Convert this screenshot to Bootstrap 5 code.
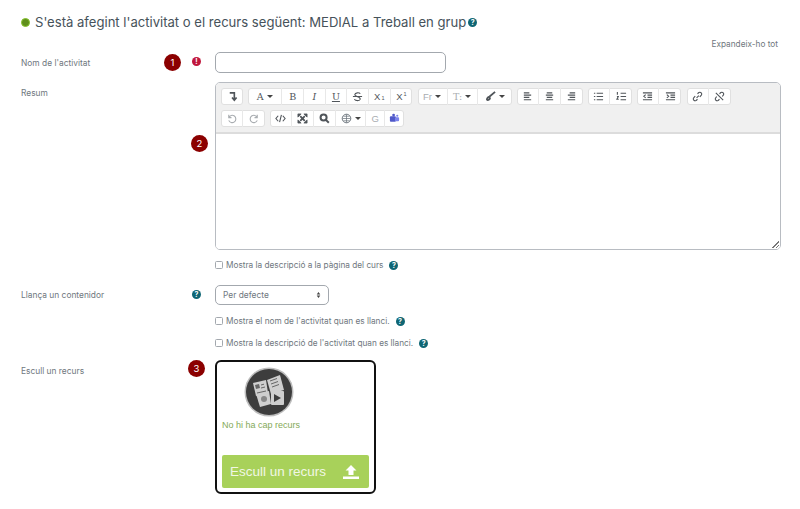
<!DOCTYPE html>
<html lang="ca">
<head>
  <meta charset="UTF-8" />
  <meta name="viewport" content="width=device-width, initial-scale=1.0"/>
  <title>Afegeix MEDIAL</title>
  <link href="https://cdn.jsdelivr.net/npm/bootstrap@5.3.4/dist/css/bootstrap.min.css" rel="stylesheet" />
  <style>
    body {
      background: #fff;
      color: #6f777e;
      font-family: Inter, "Liberation Sans", sans-serif;
      font-size: 8.4px;
      line-height: 12px;
    }
    .page-wrap { height: 509px; padding-top: 12px; overflow: hidden; }
    .page-title { height: 20px; padding-left: 21px; gap: 5px; margin: 0; font-family: Inter, sans-serif; font-size: 13.09px; font-weight: 400; line-height: 20px; color: #46525a; }
    .title-dot { width: 9px; height: 9px; border-radius: 50%; background: #5f8f1c; border: 1.5px solid #86c22b; }
    .expand-line { height: 12px; margin-top: 6px; margin-bottom: 2px; padding-right: 22px; text-align: right; font-size: 8.25px; }
    .form-line { display: flex; }
    .label-col { position: relative; flex: 0 0 215px; padding: 5px 14px 0 21px; display: flex; justify-content: space-between; align-items: flex-start; }
    .up-one { margin-top: -1px; }
    .num-mark { position: absolute; width: 17px; height: 17px; border-radius: 50%; background: #8b0000; color: #fff; font-size: 9.5px; line-height: 17px; text-align: center; }
    .mark-one { left: 164px; top: 2px; }
    .mark-two { left: 191px; top: 53px; }
    .mark-three { left: 188px; top: 0; }
    .help-dot, .err-dot { flex: none; display: inline-block; width: 9px; height: 9px; border-radius: 50%; background: #0f6674; color: #fff; font-size: 7px; font-weight: 700; line-height: 9px; text-align: center; }
    .err-dot { background: #c0173c; }
    .name-input { width: 231px; height: 21px; padding: 0 6px; font-size: 9px; border-color: #a3a8ae; border-radius: 5px; }
    .kind-select {
      width: 114px; height: 20px; min-height: 0; padding: 0 7px; font-size: 8.4px; line-height: 18px; color: #6f777e; border-color: #a3a8ae; border-radius: 5px;
      background-image: url("data:image/svg+xml,%3csvg xmlns='http://www.w3.org/2000/svg' viewBox='0 0 8 10'%3e%3cpath fill='%23444' d='M4 0 7 4H1zM4 10 1 6h6z'/%3e%3c/svg%3e");
      background-position: right 7px center; background-size: 5px 6px;
    }
    .editor-box { width: 566px; height: 168px; display: flex; flex-direction: column; border: 1px solid #b8bcc2; border-radius: 5px; overflow: hidden; }
    .editor-bar { height: 51px; padding: 5px 5px 0; background: #f0f0f0; border-bottom: 2px solid #dcdcdc; }
    .bar-row { height: 17px; gap: 5.3px; margin-bottom: 5px; }
    .tool-group { display: flex; height: 17px; background: #fff; border-radius: 3px; box-shadow: inset 0 0 0 1px #e0e0e0; }
    .tool-btn { flex: none; width: 22px; display: flex; align-items: center; justify-content: center; gap: 3px; color: #50555a; font-family: "DejaVu Serif", serif; font-size: 9.5px; border-right: 1px solid #e8e8e8; }
    .tool-btn:last-child { border-right: 0; }
    .tool-btn svg { width: 11px; height: 11px; fill: none; stroke: currentColor; stroke-width: 1.2; }
    .tool-btn.wide { width: 34px; }
    .tool-btn.mid { width: 30px; }
    .tool-btn.tight { width: 21.67px; }
    .tool-btn.end { width: 19px; }
    .tool-btn.pale { color: #a9adb1; }
    .sans-tool { font-family: "Liberation Sans", sans-serif; }
    .tool-btn sub, .tool-btn sup { font-size: 5.5px; margin-left: -2px; }
    .drop-arrow { width: 0; height: 0; color: #444; border: 3px solid transparent; border-top: 3.5px solid currentColor; border-bottom: 0; }
    .editor-area { flex: 1; position: relative; background: #fff; }
    .grip { position: absolute; right: 1px; bottom: 1px; width: 7px; height: 7px; background: linear-gradient(135deg, transparent 50%, #777 50%, #777 60%, transparent 60%, transparent 75%, #777 75%, #777 85%, transparent 85%); }
    .check-line { height: 14px; display: flex; align-items: center; font-size: 8.25px; }
    .check-line .form-check-input { width: 7.5px; height: 7.5px; margin: 0 3.5px 0 0; border-color: #a3a8ae; border-radius: 1.5px; }
    .check-line .help-dot { margin-left: 6px; }
    .res-box { width: 161px; height: 134px; padding: 5px 5px 4px; display: flex; flex-direction: column; border: 2px solid #111; border-radius: 6px; }
    .res-pic { display: block; width: 50px; height: 50px; margin-left: 22px; flex: none; filter: blur(.4px); }
    .res-empty { margin-top: 2px; font-family: "Liberation Sans", sans-serif; font-size: 9px; line-height: 12px; color: #84a957; }
    .res-btn { margin-top: auto; height: 33px; display: flex; align-items: center; justify-content: space-between; padding: 0 10px 0 8px; background: #a8d15a; border-radius: 2px; color: #f1f7e4; font-family: "Liberation Sans", sans-serif; font-size: 13.5px; }
    .gap-a { margin-top: 9px; }
    .gap-b { margin-top: 8px; }
    .gap-c { margin-top: 13px; }
    .gap-d { margin-top: 9px; }
    .gap-e { margin-top: 8px; }
    .gap-f { margin-top: 10px; }
  </style>
</head>
<body>
  <svg width="0" height="0" class="position-absolute">
    <symbol id="i-indent" viewBox="0 0 12 12"><path d="M3 2h5v7M5.500 7 8 10l2.500-3" stroke-width="1.800"/></symbol>
    <symbol id="i-strike" viewBox="0 0 12 12"><path d="M9 3C8 1.500 3.500 1.500 3 4c-.3 2 6.500 2 6 5-.4 2-5 2-6.500 0M1 6h10"/></symbol>
    <symbol id="i-brush" viewBox="0 0 12 12"><path d="M11 1 5 6M2 10c0-3 2-4 3-3s0 3-3 3" stroke-width="2"/></symbol>
    <symbol id="i-left" viewBox="0 0 12 12"><path d="M2 2h6M2 4.500h8M2 7h6M2 9.500h8"/></symbol>
    <symbol id="i-center" viewBox="0 0 12 12"><path d="M3 2h6M2 4.500h8M3 7h6M2 9.500h8"/></symbol>
    <symbol id="i-right" viewBox="0 0 12 12"><path d="M4 2h6M2 4.500h8M4 7h6M2 9.500h8"/></symbol>
    <symbol id="i-ul" viewBox="0 0 12 12"><path d="M1 2.500h1.500M1 6h1.500M1 9.500h1.500M4 2.500h7M4 6h7M4 9.500h7"/></symbol>
    <symbol id="i-ol" viewBox="0 0 12 12"><path d="M1.500 1v3M1 6h1.500L1 9h2M5 2.500h6M5 6h6M5 9.500h6"/></symbol>
    <symbol id="i-out" viewBox="0 0 12 12"><path d="M1 2h10M6 4.500h5M6 7h5M1 9.500h10M4 4 2 5.800 4 7.500"/></symbol>
    <symbol id="i-in" viewBox="0 0 12 12"><path d="M1 2h10M6 4.500h5M6 7h5M1 9.500h10M2 4l2 1.800L2 7.500"/></symbol>
    <symbol id="i-link" viewBox="0 0 12 12"><path d="M5 7.500 7.500 5M6 3l1.500-1.300c2-1.200 4 1.200 2.700 2.800L8.500 6.500M6 9l-1.500 1.300C2.500 11.500.5 9 1.800 7.500L3.500 5.500"/></symbol>
    <symbol id="i-unlink" viewBox="0 0 12 12"><path d="m2 2 8 8M6 3l1.500-1.300c2-1.200 4 1.200 2.700 2.800L9 6M6 9l-1.500 1.300C2.500 11.500.5 9 1.800 7.500L3 6"/></symbol>
    <symbol id="i-undo" viewBox="0 0 12 12"><path d="M3 2v3h3M3 5a4 4 0 1 1 0 3"/></symbol>
    <symbol id="i-redo" viewBox="0 0 12 12"><path d="M9 2v3H6M9 5a4 4 0 1 0 0 3"/></symbol>
    <symbol id="i-code" viewBox="0 0 12 12"><path d="M3.500 3 1 6l2.500 3M8.500 3 11 6 8.500 9M7 2 5 10"/></symbol>
    <symbol id="i-full" viewBox="0 0 12 12"><path d="m3.500 3.500 5 5M8.500 3.500l-5 5" stroke-width="2"/><path d="M1 1h3.500L1 4.500zM11 1H7.500L11 4.500zM1 11h3.500L1 7.500zM11 11H7.500L11 7.500z" fill="currentColor" stroke-width=".8"/></symbol>
    <symbol id="i-zoom" viewBox="0 0 12 12"><circle cx="5" cy="5" r="3.300" stroke-width="2.200"/><path d="m7.500 7.500 3.200 3.200" stroke-width="2.200"/></symbol>
    <symbol id="i-globe" viewBox="0 0 12 12"><circle cx="6" cy="6" r="4.700" stroke-width="1"/><path d="M1.500 6h9M6 1.300v9.400M2.500 3.500h7M2.500 8.500h7" stroke-width=".8"/></symbol>
    <symbol id="i-teams" viewBox="0 0 12 12"><rect x="1" y="3.500" width="6.500" height="6" rx="1" fill="#5059c9" stroke="none"/><rect x="6.500" y="4.500" width="4.500" height="4.500" rx="1" fill="#7b83eb" stroke="none"/><circle cx="5" cy="2.300" r="1.500" fill="#5059c9" stroke="none"/><circle cx="9" cy="3" r="1.200" fill="#7b83eb" stroke="none"/></symbol>
  </svg>

  <div class="page-wrap">
    <h1 class="page-title d-flex align-items-center">
      <span class="title-dot"></span>
      <span>S'està afegint l'activitat o el recurs següent: MEDIAL a Treball en grup</span>
      <span class="help-dot" style="margin-left:-3px">?</span>
    </h1>
    <div class="expand-line">Expandeix-ho tot</div>

    <div class="form-line">
      <div class="label-col"><span>Nom de l'activitat</span><span class="err-dot">!</span><span class="num-mark mark-one">1</span></div>
      <input type="text" class="form-control name-input" />
    </div>

    <div class="form-line gap-a">
      <div class="label-col"><span>Resum</span><span class="num-mark mark-two">2</span></div>
      <div class="editor-box">
        <div class="editor-bar">
          <div class="bar-row d-flex">
            <div class="tool-group"><span class="tool-btn"><svg><use href="#i-indent"/></svg></span></div>
            <div class="tool-group">
              <span class="tool-btn wide">A <i class="drop-arrow"></i></span>
              <span class="tool-btn tight">B</span>
              <span class="tool-btn tight fst-italic">I</span>
              <span class="tool-btn tight text-decoration-underline">U</span>
              <span class="tool-btn tight"><svg><use href="#i-strike"/></svg></span>
              <span class="tool-btn tight sans-tool">X<sub>1</sub></span>
              <span class="tool-btn tight sans-tool">X<sup>1</sup></span>
            </div>
            <div class="tool-group">
              <span class="tool-btn mid pale sans-tool">Fr <i class="drop-arrow"></i></span>
              <span class="tool-btn mid pale">T: <i class="drop-arrow"></i></span>
              <span class="tool-btn wide"><svg><use href="#i-brush"/></svg> <i class="drop-arrow"></i></span>
            </div>
            <div class="tool-group">
              <span class="tool-btn"><svg><use href="#i-left"/></svg></span>
              <span class="tool-btn"><svg><use href="#i-center"/></svg></span>
              <span class="tool-btn"><svg><use href="#i-right"/></svg></span>
            </div>
            <div class="tool-group">
              <span class="tool-btn"><svg><use href="#i-ul"/></svg></span>
              <span class="tool-btn"><svg><use href="#i-ol"/></svg></span>
            </div>
            <div class="tool-group">
              <span class="tool-btn"><svg><use href="#i-out"/></svg></span>
              <span class="tool-btn"><svg><use href="#i-in"/></svg></span>
            </div>
            <div class="tool-group">
              <span class="tool-btn"><svg><use href="#i-link"/></svg></span>
              <span class="tool-btn"><svg><use href="#i-unlink"/></svg></span>
            </div>
          </div>
          <div class="bar-row d-flex">
            <div class="tool-group">
              <span class="tool-btn pale"><svg><use href="#i-undo"/></svg></span>
              <span class="tool-btn pale"><svg><use href="#i-redo"/></svg></span>
            </div>
            <div class="tool-group">
              <span class="tool-btn"><svg><use href="#i-code"/></svg></span>
              <span class="tool-btn"><svg><use href="#i-full"/></svg></span>
              <span class="tool-btn"><svg><use href="#i-zoom"/></svg></span>
              <span class="tool-btn mid"><span class="d-flex text-secondary"><svg><use href="#i-globe"/></svg></span> <i class="drop-arrow"></i></span>
              <span class="tool-btn end pale sans-tool">G</span>
              <span class="tool-btn end"><svg><use href="#i-teams"/></svg></span>
            </div>
          </div>
        </div>
        <div class="editor-area"><span class="grip"></span></div>
      </div>
    </div>

    <div class="form-line gap-b">
      <div class="label-col"></div>
      <label class="check-line"><input type="checkbox" class="form-check-input" />Mostra la descripció a la pàgina del curs <span class="help-dot">?</span></label>
    </div>

    <div class="form-line gap-c">
      <div class="label-col"><span class="up-one">Llança un contenidor</span><span class="help-dot">?</span></div>
      <select class="form-select kind-select"><option>Per defecte</option></select>
    </div>

    <div class="form-line gap-d">
      <div class="label-col"></div>
      <label class="check-line"><input type="checkbox" class="form-check-input" />Mostra el nom de l'activitat quan es llanci. <span class="help-dot">?</span></label>
    </div>

    <div class="form-line gap-e">
      <div class="label-col"></div>
      <label class="check-line"><input type="checkbox" class="form-check-input" />Mostra la descripció de l'activitat quan es llanci. <span class="help-dot">?</span></label>
    </div>

    <div class="form-line gap-f">
      <div class="label-col"><span>Escull un recurs</span><span class="num-mark mark-three">3</span></div>
      <div class="res-box">
        <svg class="res-pic" viewBox="0 0 50 50">
          <circle cx="25" cy="25" r="24.500" fill="#bdbdbd"/>
          <circle cx="25" cy="25" r="23" fill="#3d3d3d"/>
          <g fill="#cfcfcf">
            <path d="m9 16 13-3 2 13-12 3z"/>
            <path d="m23 13 13-5 4 15-13 4z"/>
            <path d="m12 27 13-3 2 13-11 3z"/>
            <rect x="27" y="24" width="13" height="14" rx="1"/>
          </g>
          <g stroke="#666" stroke-width="1" fill="none">
            <path d="m17 18 3-.8M17 21l4-1M13 26l9-2M26 14l7-2.500M27 17l7-2.500M28 20l7-2.500"/>
          </g>
          <path d="m11 18 4-1 1 4-4 1z" fill="#666"/>
          <circle cx="20" cy="32" r="3" fill="#888"/>
          <path d="m30 27 7 4-7 4z" fill="#3d3d3d"/>
        </svg>
        <div class="res-empty">No hi ha cap recurs</div>
        <div class="res-btn">
          <span>Escull un recurs</span>
          <svg width="16" height="14" viewBox="0 0 16 14"><path d="M8 0 13.500 5.500H10.500V10H5.500V5.500H2.500zM0 11.500h16V14H0z" fill="#fff"/></svg>
        </div>
      </div>
    </div>
  </div>
  <script src="https://cdn.jsdelivr.net/npm/bootstrap@5.3.4/dist/js/bootstrap.bundle.min.js"></script>
</body>
</html>
